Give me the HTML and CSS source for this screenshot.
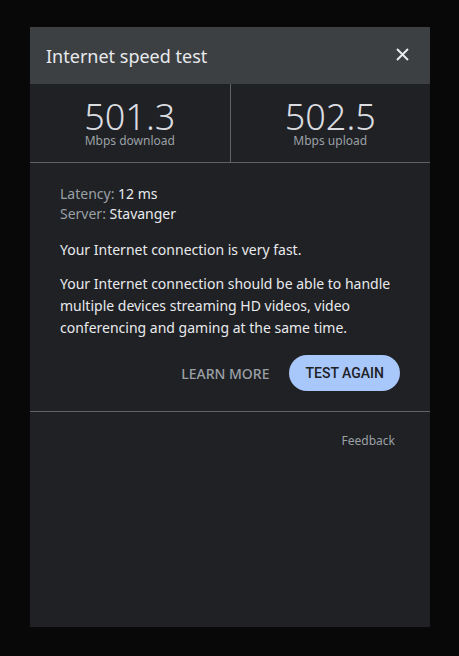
FILE: index.html
```html
<!DOCTYPE html>
<html lang="en">
<head>
    <meta charset="UTF-8">
    <meta name="viewport" content="width=device-width, initial-scale=1.0">
    <title>Internet speed test</title>
    <link rel="stylesheet" href="styles.css">
</head>
<body>
    <div class="panel">
        <div class="header">
            <h1>Internet speed test</h1>
            <button class="close" aria-label="Close">
                <svg width="13" height="13" viewBox="0 0 13 13">
                    <path d="M1 1 L12 12 M12 1 L1 12" stroke="#e8eaed" stroke-width="2" fill="none"/>
                </svg>
            </button>
        </div>

        <div class="stats">
            <div class="stat">
                <div class="value">501.3</div>
                <div class="unit">Mbps download</div>
            </div>
            <div class="stat">
                <div class="value">502.5</div>
                <div class="unit">Mbps upload</div>
            </div>
        </div>

        <div class="details">
            <div class="meta">
                <div><span class="key">Latency:</span> 12 ms</div>
                <div><span class="key">Server:</span> Stavanger</div>
            </div>
            <p>Your Internet connection is very fast.</p>
            <p>Your Internet connection should be able to handle multiple devices streaming HD videos, video conferencing and gaming at the same time.</p>
            <div class="actions">
                <button class="link">LEARN MORE</button>
                <button class="button">TEST AGAIN</button>
            </div>
        </div>

        <div class="footer">
            <a href="#" class="feedback">Feedback</a>
        </div>
    </div>
</body>
</html>
```

FILE: styles.css
```css
body {
    margin: 0;
    background: #080808;
    font-family: 'Noto Sans', sans-serif;
    color: #e8eaed;
}

.panel {
    width: 400px;
    height: 600px;
    margin: 27px 0 0 30px;
    background: #202124;
}

/* Title bar */
.header {
    height: 57px;
    display: flex;
    align-items: center;
    justify-content: space-between;
    padding: 0 21px 3px 16px;
    box-sizing: border-box;
    background: #3c4043;
}

.header h1 {
    margin: 3px 0 0;
    font-size: 18px;
    font-weight: 400;
    color: #e8eaed;
}

.close {
    display: flex;
    padding: 0;
    border: none;
    background: none;
    cursor: pointer;
}

/* Download / upload numbers */
.stats {
    display: flex;
    height: 78px;
    border-bottom: 1px solid #5f6368;
}

.stat {
    flex: 1;
    display: flex;
    flex-direction: column;
    align-items: center;
    justify-content: center;
    padding-top: 4px;
}

.stat + .stat {
    border-left: 1px solid #5f6368;
}

.value {
    font-size: 36px;
    font-weight: 300;
    line-height: 30px;
    color: #dadce0;
}

.unit {
    margin-top: 2px;
    font-size: 12px;
    line-height: 14px;
    color: #9aa0a6;
}

/* Result text */
.details {
    padding: 21px 30px 20px;
    border-bottom: 1px solid #5f6368;
    font-size: 14px;
}

.meta {
    line-height: 20px;
}

.key {
    color: #9aa0a6;
}

.details p {
    margin: 15px 0 0;
    line-height: 22px;
}

.details p + p {
    margin-top: 12px;
}

.actions {
    display: flex;
    justify-content: flex-end;
    align-items: center;
    gap: 20px;
    margin-top: 16px;
}

.link {
    border: none;
    background: none;
    font-family: 'Noto Sans', sans-serif;
    font-size: 14px;
    font-weight: 500;
    color: #9aa0a6;
    cursor: pointer;
    padding: 0;
}

.button {
    height: 36px;
    padding: 0 16px;
    border: none;
    border-radius: 18px;
    background: #a8c7fa;
    color: #202124;
    font-family: Roboto, sans-serif;
    font-size: 14px;
    font-weight: 500;
    cursor: pointer;
}

.footer {
    display: flex;
    justify-content: flex-end;
    padding: 20px 35px 0;
}

.feedback {
    font-size: 12px;
    color: #9aa0a6;
    text-decoration: none;
}
```
